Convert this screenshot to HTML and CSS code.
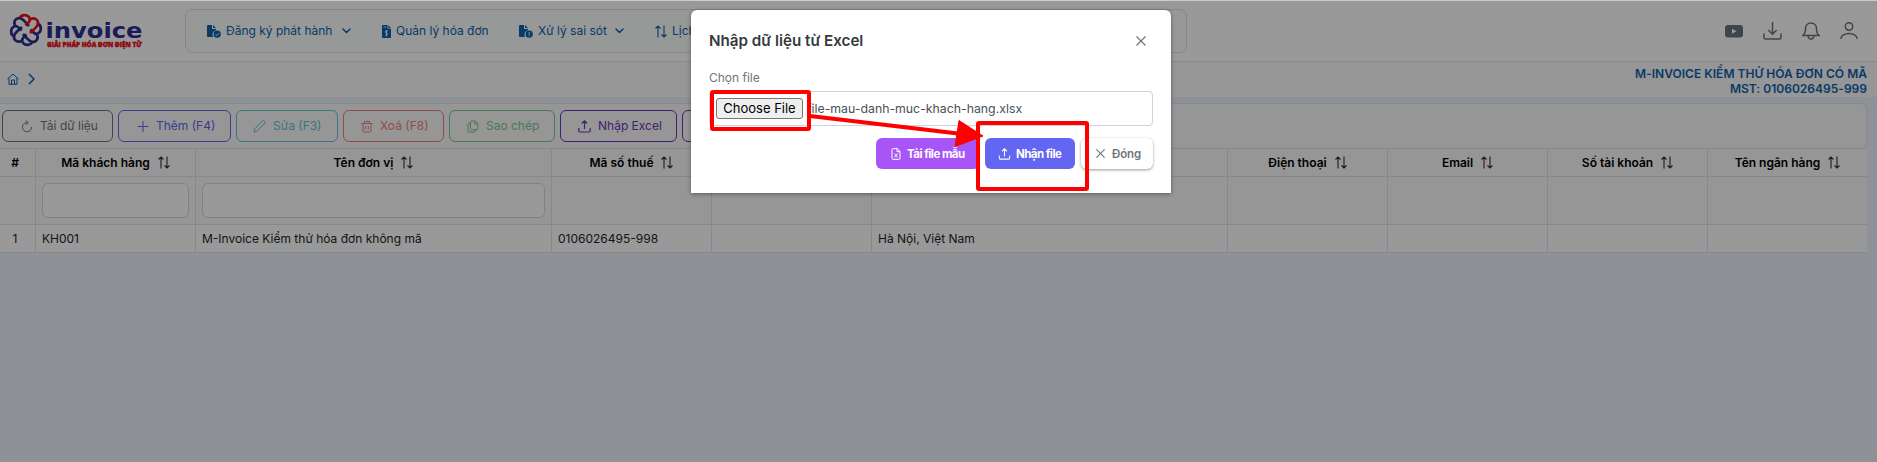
FILE: index.html
```
<!DOCTYPE html>
<html lang="vi">
<head>
<meta charset="utf-8">
<title>M-Invoice</title>
<link rel="stylesheet" href="styles.css">
</head>
<body>
<svg class="defs" width="0" height="0">
  <defs>
    <symbol id="sort" viewBox="0 0 12 13"><path d="M3 12.500V1M.5 3.500 3 1l2.500 2.500M9 .5V12M6.500 9.500 9 12l2.500-2.500" fill="none" stroke="currentColor" stroke-width="1.100"/></symbol>
    <symbol id="chev" viewBox="0 0 9 6"><path d="M1 1l3.500 3.500L8 1" fill="none" stroke="currentColor" stroke-width="1.500" stroke-linecap="round"/></symbol>
    <symbol id="upload" viewBox="0 0 13 13"><path d="M6.500 9V1M3.800 3.500 6.500.9l2.700 2.600M.8 8v2.800q0 1.200 1.200 1.200h9q1.200 0 1.200-1.200V8" fill="none" stroke="currentColor" stroke-width="1.200"/></symbol>
    <symbol id="cross" viewBox="0 0 12 12"><path d="M1.500 1.500l9 9M10.500 1.500l-9 9" fill="none" stroke="currentColor" stroke-width="1.200"/></symbol>
    <path id="petal" d="M-6-12C-5-15.500 2.500-16.500 4-10.500 8-13.500 13.500-10 11.500-5 11-3 9-1.500 4 3M4-10.500Q4-8.500-.5-4.500" fill="none" stroke-width="2.700" stroke-linejoin="round"/>
  </defs>
</svg>

<header class="topbar">
  <svg class="logo" viewBox="0 0 134 36" width="134" height="36">
    <g transform="translate(17 17)" stroke="#2d2f91">
      <use href="#petal" transform="rotate(90)"/>
      <use href="#petal" transform="rotate(180)"/>
      <use href="#petal" transform="rotate(270)"/>
      <use href="#petal" stroke="#f00c16"/>
    </g>
    <text class="logo-name" x="36.500" y="25" textLength="97" lengthAdjust="spacingAndGlyphs">invoice</text>
    <text class="logo-tag" x="38" y="33.500" textLength="95" lengthAdjust="spacingAndGlyphs">GIẢI PHÁP HÓA ĐƠN ĐIỆN TỬ</text>
  </svg>
  <nav class="menu">
    <a class="item">
      <svg width="14" height="13" viewBox="0 0 14 13"><path d="M0 1q0-1 1-1h4v4h4v1.200A4.400 4.400 0 0 0 6.200 12H1q-1 0-1-1zM6 0l3 3H6z" fill="currentColor"/><circle cx="10.200" cy="9.200" r="3.600" fill="currentColor"/><path d="M8.500 9.300l1.300 1.200 2.200-2.300" stroke="#fff" fill="none"/></svg>
      <span class="w107">Đăng ký phát hành</span><svg class="chev" width="9" height="6"><use href="#chev"/></svg>
    </a>
    <a class="item">
      <svg width="9" height="13" viewBox="0 0 9 13"><path d="M0 1q0-1 1-1h5l3 3v9q0 1-1 1H1q-1 0-1-1z" fill="currentColor"/><path d="M1.500 2H4M5.800 0v3.300H9" stroke="#fff" stroke-width=".8" fill="none"/><path d="M6 6H4q-1 .2-.9 1t1.300 1 1.200 1-.9 1.200H3M4.500 5v6.300" stroke="#fff" stroke-width=".8" fill="none"/></svg>
      <span class="w92">Quản lý hóa đơn</span>
    </a>
    <a class="item">
      <svg width="14" height="13" viewBox="0 0 14 13"><path d="M0 1q0-1 1-1h4v4h4v1.200A4.400 4.400 0 0 0 6.200 12H1q-1 0-1-1zM6 0l3 3H6z" fill="currentColor"/><circle cx="10.200" cy="9.200" r="3.600" fill="currentColor"/><path d="M10.200 7v2.700M10.200 10.500v1" stroke="#fff" fill="none"/></svg>
      <span class="w68">Xử lý sai sót</span><svg class="chev" width="9" height="6"><use href="#chev"/></svg>
    </a>
    <a class="item">
      <svg width="12" height="13"><use href="#sort"/></svg>
      <span>Lịch sử</span>
    </a>
  </nav>
  <div class="tools">
    <svg width="18" height="13" viewBox="0 0 18 13"><rect width="18" height="12.500" rx="3" fill="currentColor"/><path d="M7 3.700v5l4.500-2.500z" fill="#fff"/></svg>
    <svg width="19" height="18" viewBox="0 0 19 18"><path d="M9.500 0v12M5.300 8l4.200 4.200L13.700 8M1 11.500v4q0 1.500 1.500 1.500h14q1.500 0 1.500-1.500v-4"/></svg>
    <svg width="18" height="18" viewBox="0 0 18 18"><path d="M1 13.500c2.500-2 2.500-4 2.500-7C3.500 3 6 1 9 1s5.500 2 5.500 5.500c0 3 0 5 2.500 7zM6 14q.5 3 3 3t3-3"/></svg>
    <svg width="18" height="18" viewBox="0 0 18 18"><circle cx="9" cy="4.500" r="3.700"/><path d="M.8 17c0-7.500 16.400-7.500 16.400 0"/></svg>
  </div>
</header>

<div class="crumbs">
  <div class="path">
    <svg width="12" height="12" viewBox="0 0 12 12"><path d="M.5 6 6 1l5.500 5M2 5v6.300h8V5M4.500 11V7h3v4" fill="none" stroke="currentColor"/></svg>
    <svg width="7" height="12" viewBox="0 0 7 12"><path d="M1 1l5 5-5 5" fill="none" stroke="currentColor" stroke-width="1.500"/></svg>
  </div>
  <div class="company"><div>M-INVOICE KIỂM THỬ HÓA ĐƠN CÓ MÃ</div><div>MST: 0106026495-999</div></div>
</div>

<main class="content">
  <div class="toolbar">
    <button class="btn gray"><svg width="12" height="13" viewBox="0 0 12 13"><path d="M6.500 2.600H5.600A4.600 4.600 0 1 0 10.600 7M4.800.5l2.400 2.100-2.400 2.200" fill="none" stroke="currentColor"/></svg><span>Tải dữ liệu</span></button>
    <button class="btn indigo"><svg width="12" height="13" viewBox="0 0 12 13"><path d="M6 1v11M.5 6.500h11" stroke="currentColor"/></svg><span>Thêm (F4)</span></button>
    <button class="btn cyan"><svg width="13" height="13" viewBox="0 0 13 13"><path d="M1 12l.8-3.200L9.500 1q1-.7 2 .2t.3 2L4 11.200z" fill="none" stroke="currentColor"/></svg><span>Sửa (F3)</span></button>
    <button class="btn red"><svg width="12" height="13" viewBox="0 0 12 13"><path d="M.5 3.500h11M3.500 3.500v-2h5v2M2 3.500v7.500q0 1 1 1h6q1 0 1-1V3.500M4.700 6v3.500M7.300 6v3.500" fill="none" stroke="currentColor"/></svg><span>Xoá (F8)</span></button>
    <button class="btn green"><svg width="12" height="13" viewBox="0 0 12 13"><path d="M3.500 2.300q0-1.300 1.200-1.300h3.600l2.500 2.500v5q0 1.200-1.200 1.200H4.700q-1.200 0-1.200-1.200zM7.800 1v3h3M3.500 3.500H2q-1 0-1 1V11q0 1 1 1h5.300q1 0 1-1V9.700" fill="none" stroke="currentColor"/></svg><span>Sao chép</span></button>
    <button class="btn violet"><svg width="13" height="13"><use href="#upload"/></svg><span>Nhập Excel</span></button>
    <button class="btn violet more"></button>
  </div>

  <div class="grid">
    <div class="row head">
      <div>#</div>
      <div><span>Mã khách hàng</span><svg><use href="#sort"/></svg></div>
      <div><span>Tên đơn vị</span><svg><use href="#sort"/></svg></div>
      <div><span>Mã số thuế</span><svg><use href="#sort"/></svg></div>
      <div></div><div></div>
      <div><span>Điện thoại</span><svg><use href="#sort"/></svg></div>
      <div><span>Email</span><svg><use href="#sort"/></svg></div>
      <div><span>Số tài khoản</span><svg><use href="#sort"/></svg></div>
      <div><span>Tên ngân hàng</span><svg><use href="#sort"/></svg></div>
    </div>
    <div class="row filter">
      <div></div><div><input type="text"></div><div><input type="text"></div><div></div><div></div><div></div><div></div><div></div><div></div><div></div>
    </div>
    <div class="row data">
      <div class="num">1</div><div>KH001</div><div>M-Invoice Kiểm thử hóa đơn không mã</div><div>0106026495-998</div><div></div><div>Hà Nội, Việt Nam</div><div></div><div></div><div></div><div></div>
    </div>
  </div>
</main>

<div class="backdrop">
  <section class="modal">
    <div class="modal-head"><h2>Nhập dữ liệu từ Excel</h2><svg width="12" height="12"><use href="#cross"/></svg></div>
    <label>Chọn file</label>
    <div class="file"><span class="choose">Choose File</span><span class="name">file-mau-danh-muc-khach-hang.xlsx</span></div>
    <div class="actions">
      <button class="act purple"><svg width="10" height="12" viewBox="0 0 10 12"><path d="M1 1.800Q1 .6 2.200.6h4L9 3.400v6.800q0 1.200-1.200 1.200H2.200Q1 11.400 1 10.200zM6 .6v3h3M3.300 5.500l3.400 4M6.700 5.500l-3.400 4" fill="none" stroke="currentColor"/></svg><span>Tải file mẫu</span></button>
      <button class="act blue"><svg width="13" height="12" viewBox="0 0 13 13"><use href="#upload"/></svg><span>Nhận file</span></button>
      <button class="act close"><svg width="11" height="11" viewBox="0 0 12 12"><use href="#cross"/></svg><span>Đóng</span></button>
    </div>
  </section>
</div>

<svg class="marks" width="1877" height="462" viewBox="0 0 1877 462">
  <g fill="none" stroke="#f00" stroke-width="4">
    <rect x="712" y="92" width="97" height="37" rx="1"/>
    <rect x="978" y="123" width="109" height="66" rx="1"/>
    <path d="M810 116l148 17.500"/>
  </g>
  <path d="M959 120.500 983 136l-28 10.500z" fill="#f00" stroke="#f00" stroke-linejoin="round"/>
</svg>
</body>
</html>
```
FILE: styles.css
```
* { box-sizing: border-box; }
body {
  margin: 0;
  height: 462px;
  overflow: hidden;
  background: #edf4fa;
  font: 12px/18px Inter, "Liberation Sans", sans-serif;
  color: #212529;
}
.defs { position: absolute; }
button { font: inherit; margin: 0; }
span, h2, .company div { white-space: nowrap; }

.topbar {
  height: 62px;
  display: flex;
  align-items: flex-start;
  background: #fff;
  border-bottom: 1px solid #e8e8e8;
}
.logo { margin: 13px 0 0 9px; overflow: visible; }
.logo-name { font: bold 21px "DejaVu Sans", sans-serif; fill: #2d2f91; }
.logo-tag { font: 900 6.300px "Open Sans", sans-serif; fill: #f00c16; stroke: #f00c16; stroke-width: .4px; }
.menu {
  margin: 9px 0 0 42px;
  width: 1002px;
  height: 44px;
  padding-left: 21px;
  display: flex;
  gap: 31px;
  align-items: center;
  background: #fafffd;
  border: 1px solid #dee2e2;
  border-radius: 7px;
  color: #0d62ae;
}
.item { display: flex; align-items: center; gap: 5px; }
.item .chev { margin-left: 4px; }
.w107 { width: 107px; }
.w92 { width: 92px; }
.w68 { width: 68px; }
.tools {
  margin: 22px 19px 0 auto;
  display: flex;
  align-items: center;
  gap: 20px;
  color: #6b747c;
}
.tools svg:not(:first-child) { fill: none; stroke: currentColor; stroke-width: 1.500; }

.crumbs {
  height: 35px;
  display: flex;
  justify-content: space-between;
  background: #fafafa;
  color: #0d62ae;
}
.path { display: flex; gap: 9px; padding: 11px 0 0 7px; }
.company { padding: 4px 10px 0 0; text-align: right; font-weight: 600; line-height: 15px; letter-spacing: .02px; }

.content { padding-top: 6px; width: 1867px; }
.toolbar {
  height: 46px;
  display: flex;
  gap: 5px;
  padding: 6px 0 0 2px;
  background: #fafafa;
  border: 1px solid #dee5eb;
  border-left: 0;
  border-radius: 0 6px 6px 0;
}
.btn {
  height: 32px;
  display: flex;
  align-items: center;
  gap: 7px;
  padding: 0 0 0 18px;
  background: transparent;
  border: 1px solid currentColor;
  border-radius: 6px;
}
.gray { width: 111px; color: #6b757d; }
.indigo { width: 113px; color: #6366f1; }
.cyan { width: 102px; color: #62c4d4; padding-left: 16px; }
.red { width: 101px; color: #f28080; padding-left: 17px; }
.green { width: 106px; color: #77c98d; padding-left: 17px; }
.violet { width: 117px; color: #6a35bc; padding-left: 17px; }

.row {
  display: grid;
  grid-template-columns: 36px 160px 356px 160px 160px 356px 160px 160px 160px 159px;
}
.row > div { border-right: 1px solid #dee5eb; border-bottom: 1px solid #dee5eb; }
.row > div:last-child { border-right: 0; }
.head > div {
  height: 28px;
  display: flex;
  justify-content: center;
  align-items: center;
  gap: 8px;
  background: #fafafa;
  color: #000;
  font-weight: 600;
}
.head > div:first-child { padding-right: 5px; }
.head svg { width: 12px; height: 13px; color: #333; }
.filter > div { height: 48px; padding: 6px; background: #fafafa; }
.filter input {
  display: block;
  width: 100%;
  height: 35px;
  background: #fff;
  border: 1px solid #d4d7da;
  border-radius: 6px;
}
.data > div { height: 28px; padding: 5px 6px; background: #fff; white-space: nowrap; }
.data .num { padding: 5px 5px 5px 0; text-align: center; }

.backdrop {
  position: absolute;
  inset: 0;
  border-top: 1px solid #ccc;
  background: rgba(0, 0, 0, .4);
  background-clip: padding-box;
  display: flex;
  justify-content: center;
  align-items: flex-start;
}
.modal {
  margin: 9px 15px 0 0;
  width: 480px;
  height: 183px;
  padding: 21px 18px 0;
  background: #fff;
  border-radius: 6px 6px 0 0;
  box-shadow: 0 1px 4px rgba(0, 0, 0, .4);
}
.modal-head {
  display: flex;
  justify-content: space-between;
  align-items: center;
  height: 20px;
  padding-right: 6px;
  color: #6c757d;
}
.modal h2 { margin: 0; font-size: 15.200px; font-weight: 600; color: #343a40; }
.modal label { display: block; margin-top: 18px; color: #6c757d; }
.file {
  margin-top: 4px;
  height: 35px;
  display: flex;
  align-items: center;
  gap: 4px;
  padding-left: 6px;
  border: 1px solid #ced4da;
  border-radius: 4px;
  color: #495057;
}
.name { font-size: 12.300px; }
.choose {
  width: 87px;
  height: 21px;
  font-size: 13px;
  line-height: 19px;
  text-align: center;
  border: 1px solid #767676;
  border-radius: 3px;
  background: #efefef;
  color: #000;
}
.actions { display: flex; margin-top: 12px; padding-left: 167px; }
.act {
  height: 31px;
  display: flex;
  align-items: center;
  gap: 6px;
  border: 0;
  border-radius: 6px;
  color: #fff;
  font-size: 11.500px;
  font-weight: 700;
  letter-spacing: -.55px;
}
.purple { width: 104px; margin-right: 5px; padding: 0 0 0 15px; background: #a855f7; }
.blue { width: 90px; margin-right: 6px; padding: 0 0 0 13px; gap: 5px; background: #6366f1; }
.close { width: 72px; padding: 0 0 0 14px; background: #fff; color: #6c757d; font-weight: 600; letter-spacing: -.1px; box-shadow: 0 1px 3px rgba(0, 0, 0, .4); }
.marks { position: absolute; inset: 0; }
```
